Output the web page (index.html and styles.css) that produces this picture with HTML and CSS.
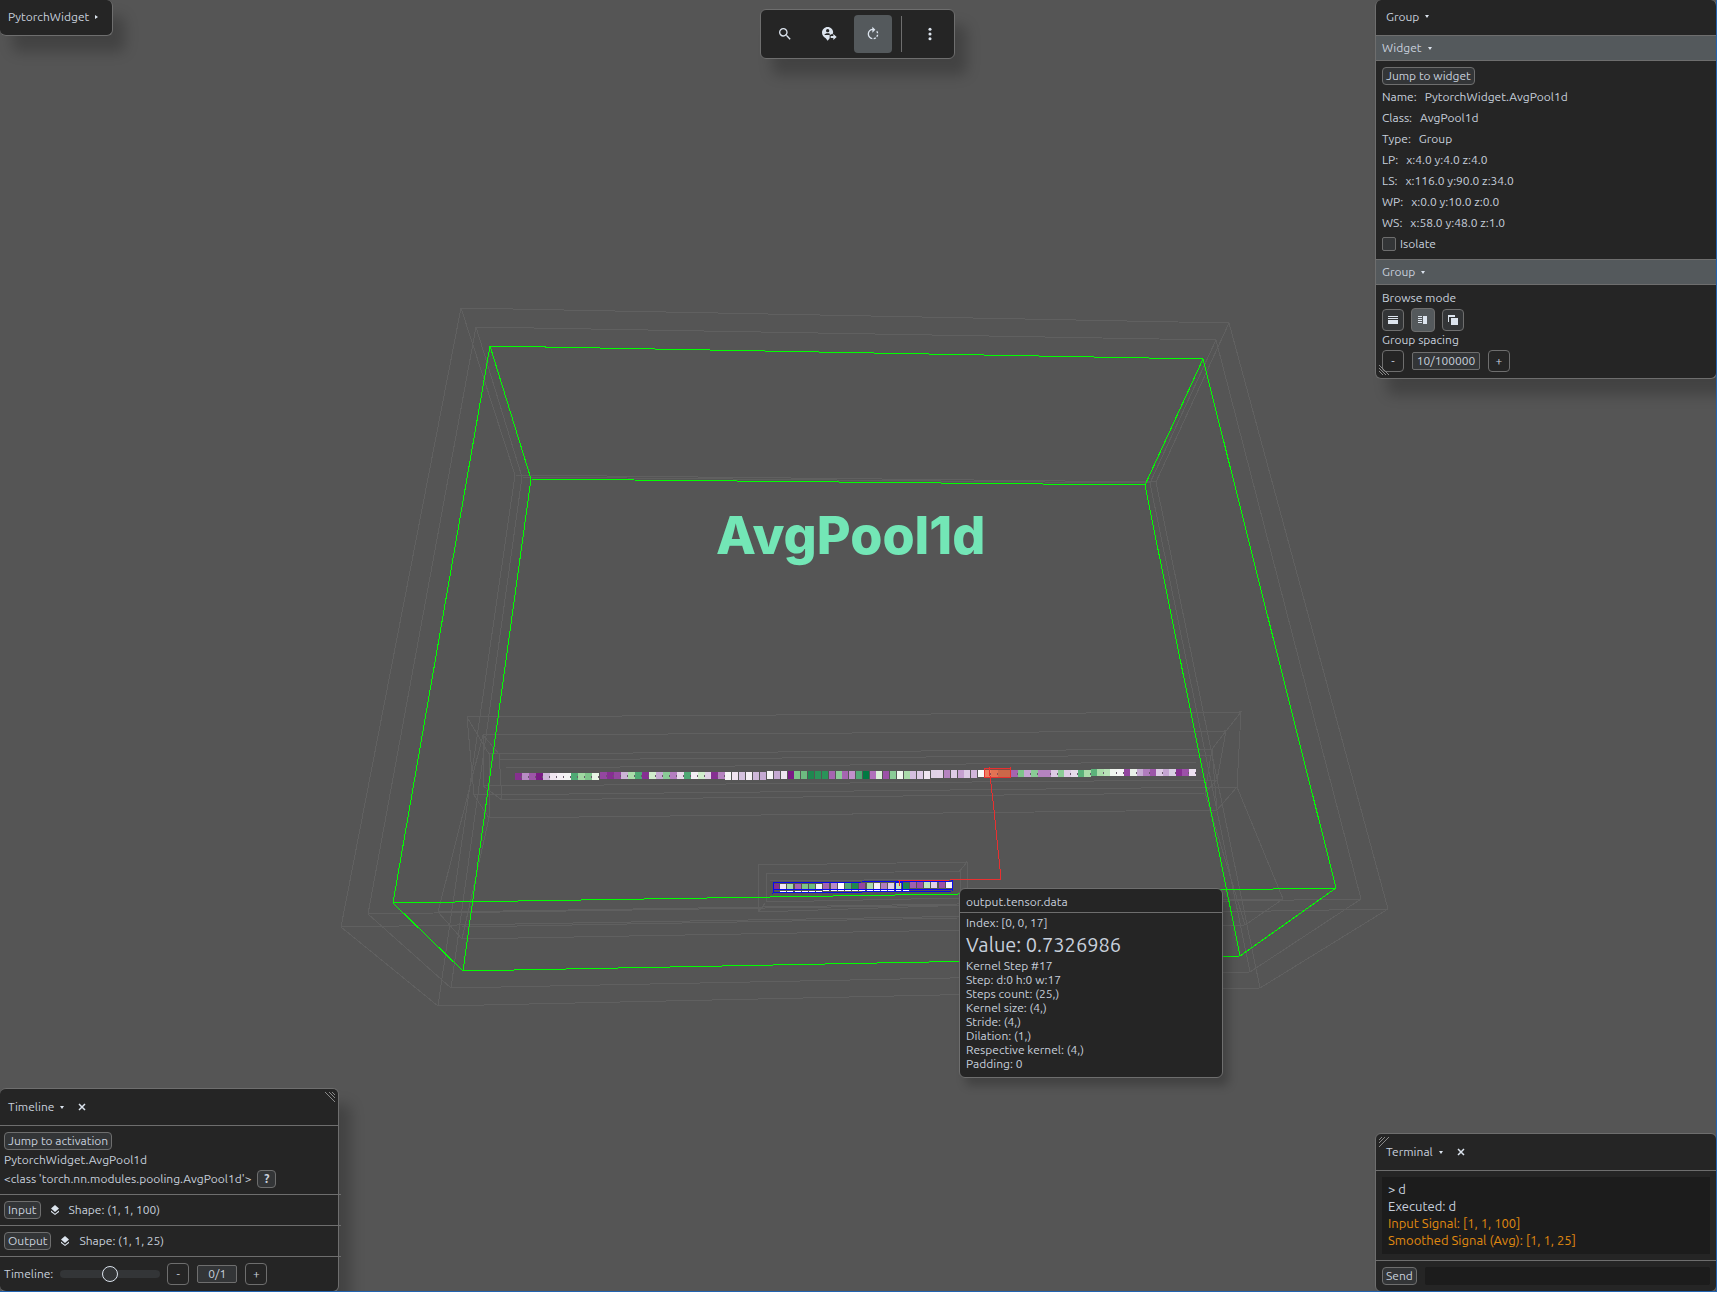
FILE: index.html
```html
<!DOCTYPE html>
<html lang="en">
<head>
  <meta charset="UTF-8">
  <title>PytorchWidget</title>
  <link rel="stylesheet" href="styles.css">
</head>
<body>
  <div class="app">
    <!-- 3D scene -->
    <svg class="scene" viewBox="0 0 1717 1292" preserveAspectRatio="xMidYMid slice">
      <!-- parent group bounds -->
      <g class="bounds">
        <path d="M461 308L1229 323L1388 909L1260 988L438 1006L341 927ZM461 308L515 475L1156 482L1229 323M515 475L438 1006M1156 482L1260 988M341 927L1388 909"/>
        <path d="M476 327L1216 340L1361 899L1250 972L451 988L368 914ZM476 327L522 477L1150 483L1216 340M522 477L451 988M1150 483L1250 972M368 914L1361 899"/>
        <path d="M438 912L462 939L1245 925L1283 899M438 912L1283 899M438 912L483 735M1283 899L1237 787M462 939L489 818M1245 925L1205 793"/>
      </g>
      <!-- input tensor bounds -->
      <g class="bounds">
        <path d="M467 717L1241 712L1237 787L1217 810L489 818L474 795ZM467 717L489 754L1212 749L1241 712M474 795L1237 787M489 754V818M1212 749L1217 810"/>
        <path d="M483 735L1226 731L1217 780L1205 793L502 800L483 786ZM483 735L499 754L502 800M1226 731L1212 749L1205 793M483 786L1217 780M506 768L1196 762M499 760L1212 755"/>
      </g>
      <!-- output tensor bounds -->
      <g class="bounds">
        <path d="M758 865L967 862L968 905L758 912ZM967 862L959 872M766 874L960 871V898L766 902ZM770 881L958 879M758 912L766 902M462 927L958 918"/>
      </g>

      <!-- selected group -->
      <path class="selection" d="M490 346L1203 359L1336 888L1240 956L463 971L393 903ZM490 346L531 479L1145 485L1203 359M531 479L463 971M1145 485L1240 956M393 903L1336 888"/>

      <text class="scene-title" x="716" y="554">AvgPool1d</text>

      <g id="inputCells"></g>
      <g id="outputCells"></g>

      <path class="marked" d="M773 883L952 881V891L773 893ZM773 890L952 889M895 882H902V891H895Z"/>
      <g class="kernel">
        <path class="kernel-area" d="M984 769L1010 768V777L984 777Z"/>
        <path d="M989 767L994 810L1001 879L899 881V886"/>
      </g>
    </svg>

    <!-- Root widget -->
    <nav class="panel root-panel">
      <button class="title">PytorchWidget <i class="arrow arrow-right"></i></button>
    </nav>

    <!-- Toolbar -->
    <div class="panel toolbar">
      <button class="tool" aria-label="Search">
        <svg viewBox="0 0 24 24"><path d="M15.5 14h-.79l-.28-.27A6.471 6.471 0 0 0 16 9.5 6.5 6.5 0 1 0 9.5 16c1.61 0 3.09-.59 4.23-1.57l.27.28v.79l5 4.99L20.49 19l-4.99-5zm-6 0C7.01 14 5 11.99 5 9.5S7.01 5 9.5 5 14 7.01 14 9.5 11.99 14 9.5 14z"/></svg>
      </button>
      <button class="tool" aria-label="Move to">
        <svg viewBox="0 0 24 24"><path fill-rule="evenodd" d="M10 1.500C5.300 1.500 1.500 5.200 1.500 10c0 3.800 2.600 6.200 5.600 8.500L10 22l3-3.500v-6h4.300l.9-2.500C18.500 5.200 14.700 1.500 10 1.500zM10 4.500a2.500 2.500 0 1 1 0 5 2.500 2.500 0 0 1 0-5zM5 13.500c.5-2 3-2.700 5-2.700s4.500.7 5 2.700z"/><path d="M14.500 15h4v-3l5 4.500-5 4.500v-3h-4z"/></svg>
      </button>
      <button class="tool active" aria-label="Rotate">
        <svg viewBox="0 0 24 24"><path d="M15.550 5.550L11 1v3.070C7.060 4.560 4 7.920 4 12s3.050 7.440 7 7.930v-2.020c-2.840-.48-5-2.940-5-5.910s2.160-5.430 5-5.910V10l4.550-4.450zM19.930 11c-.17-1.390-.72-2.730-1.620-3.890l-1.420 1.420c.54.75.88 1.600 1.020 2.470h2.020zM13 17.900v2.020c1.390-.17 2.740-.71 3.900-1.610l-1.440-1.440c-.75.54-1.590.89-2.460 1.030zm3.890-2.420l1.420 1.410c.9-1.160 1.450-2.500 1.620-3.890h-2.020c-.14.87-.48 1.720-1.020 2.480z"/></svg>
      </button>
      <span class="divider"></span>
      <button class="tool" aria-label="More">
        <svg viewBox="0 0 24 24"><circle cx="12" cy="5" r="2.300"/><circle cx="12" cy="12" r="2.300"/><circle cx="12" cy="19" r="2.300"/></svg>
      </button>
    </div>

    <!-- Group panel -->
    <section class="panel side-panel group-panel">
      <header class="panel-header">
        <button class="title">Group <i class="arrow"></i></button>
      </header>
      <button class="section-title">Widget <i class="arrow"></i></button>
      <div class="section">
        <button class="btn">Jump to widget</button>
        <dl class="props">
          <div><dt>Name:</dt><dd>PytorchWidget.AvgPool1d</dd></div>
          <div><dt>Class:</dt><dd>AvgPool1d</dd></div>
          <div><dt>Type:</dt><dd>Group</dd></div>
          <div><dt>LP:</dt><dd>x:4.0 y:4.0 z:4.0</dd></div>
          <div><dt>LS:</dt><dd>x:116.0 y:90.0 z:34.0</dd></div>
          <div><dt>WP:</dt><dd>x:0.0 y:10.0 z:0.0</dd></div>
          <div><dt>WS:</dt><dd>x:58.0 y:48.0 z:1.0</dd></div>
        </dl>
        <label class="check"><input type="checkbox">Isolate</label>
      </div>
      <button class="section-title">Group <i class="arrow"></i></button>
      <div class="section">
        <div class="caption">Browse mode</div>
        <div class="modes">
          <button class="btn-icon" aria-label="Rows">
            <svg viewBox="0 0 12 12"><path d="M1 2h10v1H1zM1 4h10v1H1zM1 6h10v4H1z"/></svg>
          </button>
          <button class="btn-icon active" aria-label="Columns">
            <svg viewBox="0 0 12 12"><path d="M1 2h4v1H1zM1 4h4v1H1zM1 6h4v1H1zM1 8h4v1H1zM6 2h4v8H6z"/></svg>
          </button>
          <button class="btn-icon" aria-label="Stack">
            <svg viewBox="0 0 12 12"><path d="M1 1h7v2H2v5H1zM4 4h7v7H4z"/></svg>
          </button>
        </div>
        <div class="caption">Group spacing</div>
        <div class="stepper spacing">
          <button class="btn-step">-</button>
          <output class="value">10/100000</output>
          <button class="btn-step">+</button>
        </div>
      </div>
      <svg class="grip grip-bl" viewBox="0 0 10 10"><path d="M0 0L10 10M0 3L7 10M0 6L4 10"/></svg>
    </section>

    <!-- Timeline -->
    <section class="panel timeline">
      <header class="panel-header tall">
        <button class="title">Timeline <i class="arrow"></i></button>
        <button class="close" aria-label="Close"><svg viewBox="0 0 8 8"><path d="M1 1l6 6M7 1L1 7"/></svg></button>
      </header>
      <div class="row activation">
        <button class="btn">Jump to activation</button>
        <div class="line">PytorchWidget.AvgPool1d</div>
        <div class="line class-line">&lt;class 'torch.nn.modules.pooling.AvgPool1d'&gt; <button class="btn help">?</button></div>
      </div>
      <div class="row signal">
        <button class="btn">Input</button>
        <svg class="layers" viewBox="0 0 10 10"><path d="M5 0l4 3.500L5 7 1 3.500zM1 5.500l4 3.300 4-3.300v1.500L5 10 1 7z"/></svg>
        <span>Shape: (1, 1, 100)</span>
      </div>
      <div class="row signal">
        <button class="btn">Output</button>
        <svg class="layers" viewBox="0 0 10 10"><path d="M5 0l4 3.500L5 7 1 3.500zM1 5.500l4 3.300 4-3.300v1.500L5 10 1 7z"/></svg>
        <span>Shape: (1, 1, 25)</span>
      </div>
      <div class="row player">
        <label for="step">Timeline:</label>
        <input class="slider" type="range" id="step" min="0" max="2" value="1">
        <div class="stepper">
          <button class="btn-step">-</button>
          <output class="value short">0/1</output>
          <button class="btn-step">+</button>
        </div>
      </div>
      <svg class="grip grip-tr" viewBox="0 0 10 10"><path d="M0 0L10 10M4 0L10 6M7 0L10 3"/></svg>
    </section>

    <!-- Terminal -->
    <section class="panel side-panel terminal">
      <header class="panel-header tall">
        <button class="title">Terminal <i class="arrow"></i></button>
        <button class="close" aria-label="Close"><svg viewBox="0 0 8 8"><path d="M1 1l6 6M7 1L1 7"/></svg></button>
      </header>
      <div class="log">
        <div>&gt; d</div>
        <div>Executed: d</div>
        <div class="out">Input Signal: [1, 1, 100]</div>
        <div class="out">Smoothed Signal (Avg): [1, 1, 25]</div>
      </div>
      <form class="prompt">
        <button class="btn" type="button">Send</button>
        <input type="text" aria-label="Command">
      </form>
      <svg class="grip grip-tl" viewBox="0 0 10 10"><path d="M0 10L10 0M0 6L6 0M0 3L3 0"/></svg>
    </section>

    <!-- Cell tooltip -->
    <div class="panel tooltip">
      <div class="tooltip-title">output.tensor.data</div>
      <div class="tooltip-index">Index: [0, 0, 17]</div>
      <div class="tooltip-value">Value: 0.7326986</div>
      <div>Kernel Step #17</div>
      <div>Step: d:0 h:0 w:17</div>
      <div>Steps count: (25,)</div>
      <div>Kernel size: (4,)</div>
      <div>Stride: (4,)</div>
      <div>Dilation: (1,)</div>
      <div>Respective kernel: (4,)</div>
      <div>Padding: 0</div>
    </div>
  </div>

  <script src="scene.js"></script>
</body>
</html>
```

FILE: styles.css
```css
/* Base */
* {
  box-sizing: border-box;
}

body {
  margin: 0;
  background: #555555;
  color: #c8d0dc;
  font-family: 'Ubuntu', 'Noto Sans', sans-serif;
  font-size: 12px;
  line-height: 14px;
}

button,
input {
  margin: 0;
  padding: 0;
  border: none;
  background: none;
  color: inherit;
  font: inherit;
}

button {
  cursor: pointer;
}

.app {
  position: relative;
  display: grid;
  grid-template-columns: 1fr auto 1fr;
  grid-template-rows: 1fr auto;
  height: 100vh;
  overflow: hidden;
}

/* window edge */
.app::after {
  content: "";
  position: absolute;
  inset: 0;
  border-right: 1px solid #2263b0;
  border-bottom: 1px solid #2263b0;
  pointer-events: none;
}

/* Scene */
.scene {
  position: absolute;
  width: 100%;
  height: 100%;
  fill: none;
  shape-rendering: crispEdges;
}

.bounds {
  stroke: #606060;
}

.selection {
  stroke: #00ff00;
}

.scene-title {
  fill: #73e6b6;
  font-family: 'Inter', sans-serif;
  font-size: 52px;
  font-weight: 800;
}

.marked {
  stroke: #0808f0;
}

.kernel {
  stroke: #e83030;
}

.kernel-area {
  fill: rgba(230, 50, 20, 0.3);
}

/* Panels */
.panel {
  position: relative;
  background: #252525;
  border: 1px solid #6e6e6e;
  border-radius: 6px;
  box-shadow: 12px 16px 14px rgba(0, 0, 0, 0.22);
}

.side-panel {
  width: 342px;
  justify-self: end;
}

.panel-header {
  display: flex;
  align-items: center;
  gap: 14px;
  height: 35px;
  padding: 0 10px;
  border-bottom: 1px solid #6e6e6e;
}

.panel-header.tall {
  height: 37px;
}

.title {
  display: flex;
  align-items: center;
  gap: 6px;
}

.arrow {
  border: 2px solid transparent;
  border-top: 3px solid #dce4ee;
  border-bottom: none;
}

.arrow-right {
  border: 2px solid transparent;
  border-left: 3px solid #dce4ee;
  border-right: none;
}

.close svg {
  display: block;
  width: 8px;
  height: 8px;
  fill: none;
  stroke: #dce4ee;
  stroke-width: 1.5;
}

/* Buttons */
.btn {
  height: 18px;
  padding: 0 3px;
  border: 1px solid #6e6e6e;
  border-radius: 4px;
  background: #333537;
  line-height: 16px;
}

.btn-icon,
.btn-step {
  display: flex;
  align-items: center;
  justify-content: center;
  width: 22px;
  height: 22px;
  border: 1px solid #6e6e6e;
  border-radius: 4px;
}

.btn-icon {
  background: #333537;
}

.btn-icon.active {
  width: 24px;
  height: 24px;
  background: #54595c;
}

.btn-icon svg {
  width: 12px;
  height: 12px;
  fill: #dce4ee;
  shape-rendering: crispEdges;
}

.stepper {
  display: flex;
  align-items: center;
  gap: 8px;
}

.value {
  width: 68px;
  height: 18px;
  border: 1px solid #6e6e6e;
  border-radius: 2px;
  background: #333537;
  line-height: 16px;
  text-align: center;
}

.value.short {
  width: 40px;
}

/* Resize grips */
.grip {
  position: absolute;
  width: 10px;
  height: 10px;
  fill: none;
  stroke: #8a8a8a;
}

.grip-bl {
  left: 3px;
  bottom: 3px;
}

.grip-tr {
  right: 3px;
  top: 3px;
}

.grip-tl {
  left: 3px;
  top: 3px;
}

/* Root widget */
.root-panel {
  display: flex;
  align-items: center;
  justify-self: start;
  align-self: start;
  height: 36px;
  padding: 0 14px 2px 8px;
  border-left: none;
  border-top: none;
  border-radius: 0 6px 6px 6px;
}

/* Toolbar */
.toolbar {
  display: flex;
  align-items: center;
  align-self: start;
  gap: 6px;
  margin: 9px 3px 0 0;
  padding: 5px;
}

.tool {
  display: flex;
  align-items: center;
  justify-content: center;
  width: 38px;
  height: 38px;
  border-radius: 4px;
}

.tool.active {
  background: #54595c;
}

.tool svg {
  width: 16px;
  height: 16px;
  fill: #dce4ee;
}

.divider {
  width: 1px;
  height: 36px;
  margin: 0 3px;
  background: #6e6e6e;
}

/* Group panel */
.group-panel {
  align-self: start;
  border-top: none;
}

.group-panel .panel-header {
  padding-bottom: 2px;
  border-bottom: none;
}

.section-title {
  display: flex;
  align-items: center;
  gap: 6px;
  width: 100%;
  height: 26px;
  padding: 0 6px;
  border: solid #6e6e6e;
  border-width: 1px 0;
  background: #54595c;
}

.section {
  padding: 6px 6px 5px;
}

.props {
  margin: 1px 0 0;
}

.props div {
  display: flex;
  gap: 8px;
  line-height: 21px;
}

.props dd {
  margin: 0;
}

.check {
  display: flex;
  align-items: center;
  gap: 4px;
  height: 21px;
}

.check input {
  appearance: none;
  width: 14px;
  height: 14px;
  border: 1px solid #6e6e6e;
  border-radius: 2px;
  background: #333537;
}

.caption {
  height: 16px;
}

.modes {
  display: flex;
  align-items: center;
  gap: 7px;
  height: 26px;
}

.spacing {
  padding: 1px 0;
}

/* Timeline */
.timeline {
  grid-row: 2;
  width: 339px;
  align-self: end;
  border-left: none;
}

.timeline .panel-header {
  padding-left: 8px;
}

.row {
  display: flex;
  align-items: center;
  height: 31px;
  margin-right: -3px;
  padding-left: 4px;
  border-top: 1px solid #6e6e6e;
}

.activation {
  display: block;
  height: auto;
  margin-right: 0;
  padding: 6px 4px;
  border-top: none;
}

.line {
  line-height: 19px;
}

.class-line {
  display: flex;
  align-items: center;
  gap: 6px;
}

.help {
  width: 19px;
  font-weight: bold;
}

.signal {
  gap: 9px;
}

.layers {
  width: 10px;
  height: 10px;
  fill: #dce4ee;
}

.player {
  gap: 7px;
  height: 35px;
}

.slider {
  appearance: none;
  width: 100px;
  height: 8px;
  border-radius: 4px;
  background: #333537;
}

.slider::-webkit-slider-thumb {
  appearance: none;
  width: 16px;
  height: 16px;
  border: 1px solid #dce4ee;
  border-radius: 50%;
  background: #333537;
}

/* Terminal */
.terminal {
  grid-column: 3;
  grid-row: 2;
  align-self: end;
}

.log {
  margin: 6px;
  padding: 4px 6px 5px;
  background: #1c1c1c;
  font-size: 13px;
  line-height: 17px;
}

.out {
  color: #e08a10;
}

.prompt {
  display: flex;
  gap: 8px;
  padding: 6px;
  border-top: 1px solid #6e6e6e;
}

.prompt input {
  flex: 1;
  border-radius: 2px;
  background: #1c1c1c;
}

/* Tooltip over the scene */
.tooltip {
  position: absolute;
  left: 959px;
  top: 888px;
  width: 264px;
  padding: 0 6px 6px;
  box-shadow: 6px 8px 10px rgba(0, 0, 0, 0.22);
}

.tooltip-title {
  margin: 0 -6px;
  padding: 2px 6px 0;
  border-bottom: 1px solid #6e6e6e;
  line-height: 21px;
}

.tooltip-index {
  line-height: 19px;
}

.tooltip-value {
  padding-bottom: 1px;
  font-size: 20px;
  line-height: 26px;
}
```

FILE: scene.js
```javascript
// tensor cells, purple = negative, green = positive
var INPUT = [
  '#86308f', '#b88cc4', '#9c56a8', '#7a1a85', '#cdb5d8', '#f0e6f0', '#f5f0f5', '#f5f5f5', '#4fa974', '#a0d8a2',
  '#7dc48a', '#e8f5e6', '#9447a0', '#862f92', '#9447a0', '#cdb5d8', '#aadcaa', '#4fa974', '#862f92', '#d0edcc',
  '#c5aad2', '#8acb96', '#b47dbf', '#e6d8e8', '#4fa974', '#f3eef5', '#d0edcc', '#e0d2e6', '#862f92', '#b583c0',
  '#f5f5f5', '#f0e3f0', '#d5c2df', '#f5f0f5', '#cfb8da', '#c5aad2', '#f5f5f5', '#c5aad2', '#eee5f0', '#7a1a85',
  '#7dc48a', '#6dbb80', '#1f8850', '#2a9459', '#2a9459', '#a565b0', '#8acb96', '#a565b0', '#c090cb', '#4fa974',
  '#007a42', '#b070ba', '#d9efd6', '#9c50a8', '#8acb96', '#f0f5ef', '#aadcaa', '#d5bfdf', '#ddcbe5', '#efe5f0',
  '#e0d2e6', '#e3d3e8', '#b583c0', '#ddcbe5', '#c5a0d0', '#dccae4', '#d0b5da', '#f7f7f7', '#f0a080', '#e09070',
  '#c08060', '#c08060', '#a565b0', '#7dc48a', '#c5a5d2', '#8acb96', '#b583c0', '#b583c0', '#ddcbe5', '#8acb96',
  '#ddcbe5', '#e6dcea', '#5bb27a', '#aadcaa', '#5bb27a', '#aadcaa', '#b8e2b8', '#f0f5ef', '#f5f5f5', '#9447a0',
  '#e8f0e8', '#c5aad2', '#b07cbd', '#9c56a8', '#ddcbe5', '#c5a5d2', '#d8cfe3', '#862f92', '#9c50a8', '#ece0f0'
];

var OUTPUT = [
  '#86308f', '#f0e6f5', '#a5d8a8', '#a565b0', '#7dc48a', '#6dbb80', '#f5f5f5', '#a565b0', '#b98cc8', '#ffffff',
  '#4fa974', '#1f8850', '#9447a0', '#aadcaa', '#f5f0f8', '#b07cbd', '#e0cfe8', '#c0e5c0', '#1f8850', '#a060b0',
  '#9c50a8', '#c0e5c0', '#e0cfe8', '#9c50a8', '#f5f0fa'
];

function addCell(parent, x, y, w, h, color) {
  var rect = document.createElementNS('http://www.w3.org/2000/svg', 'rect');
  rect.setAttribute('x', x);
  rect.setAttribute('y', y);
  rect.setAttribute('width', w);
  rect.setAttribute('height', h);
  rect.setAttribute('fill', color);
  parent.appendChild(rect);
}

var inputCells = document.getElementById('inputCells');
INPUT.forEach(function (color, i) {
  // cells get narrower with the perspective
  var x = Math.round(514.5 + 7.122 * i - 0.00312 * i * i);
  // side faces close the gaps towards both ends
  var side = i < 30 || i > 66;
  addCell(inputCells, x, Math.round(773 - 0.042 * i), side ? 7 : 6, side ? 7 : 8, color);
  if (side) addCell(inputCells, x + 6, Math.round(776 - 0.042 * i), 1, 2, '#6a5a6c');
});

var outputCells = document.getElementById('outputCells');
OUTPUT.forEach(function (color, i) {
  var x = Math.round(773 + 7.2 * i);
  var y = Math.round(884 - 0.08 * i);
  addCell(outputCells, x, y, 6, 6, color);
  if (i > 0) addCell(outputCells, x, y + 7, 6, 1, '#ffffff');
});
```
